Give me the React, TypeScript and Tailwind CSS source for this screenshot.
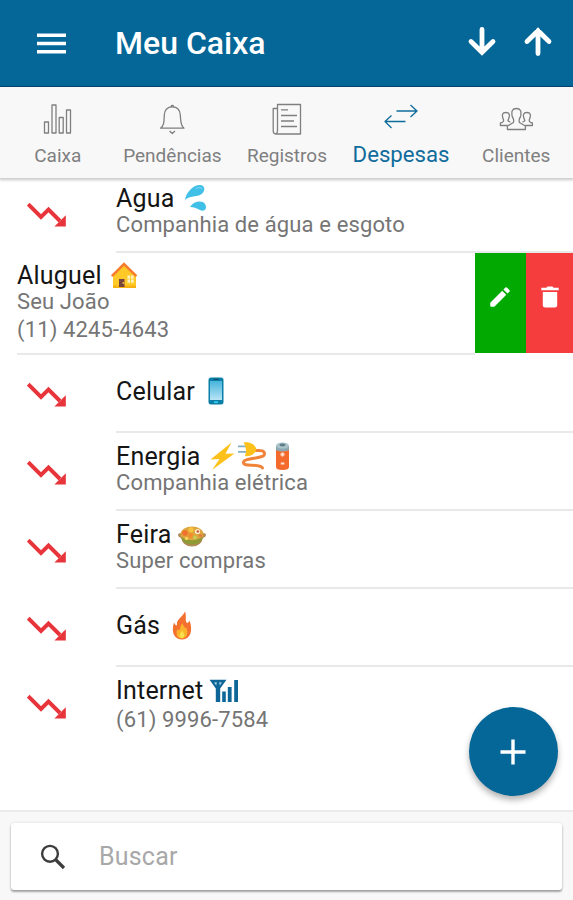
import type { ReactNode } from "react";

const TrendDown = () => (
  <svg width="40" height="26" viewBox="0 0 40 26" fill="none">
    <path d="M1.2 2.2 L14 15 L21.5 7.5 L33 19" stroke="#e8343b" strokeWidth="3.9" />
    <path d="M38.8 13.2 V24.6 H27.4 Z" fill="#e8343b" />
  </svg>
);

const Drops = () => (
  <svg width="24" height="28" viewBox="0 0 24 28" className="ml-[9px] mt-[-1px]">
    <path d="M1 16 C2 8 10 0 17 1 C22 2 21 9 16 11 C10 13 5 12 1 16Z" fill="#40c0e7" />
    <path d="M6 23 C10 17 18 16 21 20 C24 25 20 28 16 26 C12 24 10 23 6 23Z" fill="#40c0e7" />
    <path d="M12 5 C14 3 17 3 18 5" stroke="#81d4fa" strokeWidth="1.2" fill="none" />
  </svg>
);

const House = () => (
  <svg width="26" height="26" viewBox="0 0 26 26" className="ml-[9px]">
    <path d="M2 13 L13 3 L25 13 V26 H2Z" fill="#ffca28" />
    <path d="M2 23.5 H25 V26 H2Z" fill="#f7b312" />
    <path d="M1.6 13.4 L13 2 L24.6 13.4" stroke="#f57c2c" strokeWidth="2.6" fill="none" strokeLinecap="round" />
    <path d="M8 17 H13.5 V25 H8Z" fill="#75443f" />
    <path d="M11.5 20 H13.5 V22 H11.5Z" fill="#e7a83a" />
    <path d="M16.5 13.5 h2.6 v3.2 h-2.6z M20 13.5 h2.6 v3.2 H20z M16.5 17.6 h2.6 v3.2 h-2.6z M20 17.6 h2.6 v3.2 H20z" fill="#fff3c4" />
  </svg>
);

const Phone = () => (
  <svg width="16" height="28" viewBox="0 0 16 28" className="ml-[13px] mt-[-1px]">
    <defs>
      <linearGradient id="screen" x1="0" y1="0" x2="0" y2="1">
        <stop offset="0" stopColor="#45b5dc" />
        <stop offset="1" stopColor="#b9e4f5" />
      </linearGradient>
    </defs>
    <rect x="0.5" y="0.5" width="15" height="27" rx="2.5" fill="#0b7fa8" />
    <rect x="2" y="4" width="12" height="19" fill="url(#screen)" />
    <path d="M5.5 2.3h5" stroke="#0a4860" strokeWidth="1" />
    <path d="M6 25.2h4" stroke="#3ed0ee" strokeWidth="1.6" />
  </svg>
);

const Bolt = () => (
  <svg width="26" height="28" viewBox="0 0 26 28" className="ml-[8px] mt-[-1px]">
    <path d="M22.5 0.5 L1.5 17.5 L10.5 17 L3 28 L25.5 11.5 L16.5 11.8Z" fill="#fcc21b" />
  </svg>
);

const Plug = () => (
  <svg width="30" height="28" viewBox="0 0 30 28" className="ml-[2px] mt-[-1px]" fill="none">
    <path d="M17 8.5 C21 9 27.5 7 27.5 12 C27.5 17 7.5 15.5 6.5 20 C5.5 26 22 20.5 25.5 26" stroke="#f08337" strokeWidth="3" strokeLinecap="round" />
    <path d="M1 4.4 H9 M1 9.8 H9" stroke="#82aebf" strokeWidth="1.8" />
    <path d="M6.5 0.6 C12.5 -0.5 18.5 2.5 19.5 7.5 C18 12.5 13 15 8 14 Q9.5 10 8.8 7 Q8.5 3 6.5 0.6Z" fill="#fcc21b" />
  </svg>
);

const Battery = () => (
  <svg width="15" height="28" viewBox="0 0 15 28" className="ml-[8px] mt-[-1px]">
    <path d="M1 4 H14 V25 Q14 28 7.5 28 Q1 28 1 25Z" fill="#f4692c" />
    <path d="M1 8 V4 H14 V8 Q7.5 11 1 8Z" fill="#8da8b2" />
    <ellipse cx="7.5" cy="3.6" rx="6.5" ry="3" fill="#a9c3c9" />
    <ellipse cx="7.5" cy="3" rx="3" ry="1.4" fill="#607d87" />
    <path d="M5.5 12.5h4M7.5 10.5v4M5.8 21.5h3.6" stroke="#ffe3cf" strokeWidth="2" />
  </svg>
);

const Bowl = () => (
  <svg width="30" height="24" viewBox="0 0 30 24" className="ml-[6px] mt-[4px]">
    <path d="M1 10 Q1 8 4 8 H26 Q29 8 29 10 Q29 12 26 13 Q24 21.5 15 21.5 Q6 21.5 4 13 Q1 12 1 10Z" fill="#b08a55" />
    <ellipse cx="15" cy="9.5" rx="11.5" ry="8" fill="#dda53c" />
    <path d="M4 11.5 Q15 19 26 11.5 Q24 19.5 15 19.5 Q6 19.5 4 11.5Z" fill="#8d9a35" />
    <circle cx="8" cy="8" r="2.8" fill="#f2702e" />
    <circle cx="14" cy="4.8" r="2.6" fill="#f7c33d" />
    <circle cx="20.5" cy="6.5" r="2.6" fill="#fff0cf" />
    <circle cx="20.8" cy="6.5" r="1.3" fill="#c2573e" />
    <circle cx="13.5" cy="10.5" r="2.4" fill="#f58b2d" />
    <circle cx="18" cy="12.5" r="2" fill="#c4cc55" />
    <circle cx="9.5" cy="13.5" r="1.6" fill="#ffd75b" />
    <circle cx="23.5" cy="10.5" r="1.6" fill="#e27a44" />
  </svg>
);

const Flame = () => (
  <svg width="20" height="29" viewBox="0 0 20 29" className="ml-[12px] mt-[-1px]">
    <path d="M13 0.5 C15 6 12.5 9 15 12 Q16.5 12 17.5 9.5 C20.5 17 20 28 10 28.5 C0.5 28.5 -0.5 19 2 11.5 Q3 14.5 5 14.5 C4 8 10 7 13 0.5Z" fill="#f3702f" />
    <path d="M10.5 12 C11.5 16 13 17 14.5 17 C17 23 14 27.5 10 27.5 C5 27.5 3.5 23 5.2 18.5 Q7 19.5 8 18.5 C8 16 9 14 10.5 12Z" fill="#fbb32b" />
    <path d="M10.3 19 C10.5 21.5 12.5 22 12.3 24.5 C11.8 27.8 7.8 27.5 7.6 24.8 C7.5 22.5 9.7 21.5 10.3 19Z" fill="#fde04f" />
  </svg>
);

const Signal = () => (
  <svg width="30" height="24" viewBox="0 0 30 24" className="ml-[6px] mt-[2px]" fill="#0e6698">
    <path d="M0.5 0.8 H17.5 L11.2 9.5 V23 H6.8 V9.5Z" />
    <path d="M13.2 12.5h3.6V23h-3.6z M18.8 8h3.8v15h-3.8z M25.2 1h3.8v22h-3.8z" />
    <path d="M5 3.6 L7.2 6.4 L7.9 3.3Z M10.1 3.3 L10.8 6.4 L13 3.6Z" fill="#a5d2e5" />
  </svg>
);

const tabs: { label: string; icon: ReactNode; active?: boolean }[] = [
  {
    label: "Caixa",
    icon: (
      <path d="M7.5 21h4v11h-4z M15 4h4v28h-4z M22.2 16.5h4V32h-4z M29.5 9h4v23h-4z" />
    ),
  },
  {
    label: "Pendências",
    icon: (
      <path d="M8.5 27.2 C12.3 24.5 12 20 12.3 14 C12.6 9 15.3 5.8 20.3 5.8 C25.3 5.8 28 9 28.3 14 C28.8 20 28.3 24.5 32 27.2Z M18.8 5.5 Q20.3 3.2 21.8 5.5 M17.5 30 L20.3 32.5 L23 30" />
    ),
  },
  {
    label: "Registros",
    icon: (
      <path d="M11.5 3.5 H34.5 V33 H10.5 Q7.2 33 7.2 30 V7.5 H11.5Z M11.5 7.5 V30 Q11.5 32 9.5 33 M15 8.8h7 M15 14.5h16 M15 20h13 M15 25.5h16" />
    ),
  },
  {
    label: "Despesas",
    active: true,
    icon: <path d="M15.5 10H36 M29.5 4 L36 10 L29.5 16 M24.5 20.5H4 M10.5 14.5 L4 20.5 L10.5 27" />,
  },
  {
    label: "Clientes",
    icon: (
      <path d="M17.4 21.5 Q18.4 18.5 16.2 15.5 C15.2 10 16.2 7.5 20.4 7.5 C24.6 7.5 25.6 10 24.6 15.5 Q22.4 18.5 23.4 21.5 L29.4 25 V28.5 H11.4 V25 Z M14.4 21 Q10.9 20 12.4 18.5 C14.4 14 13.4 11.5 9.9 11.5 C6.4 11.5 5.4 14 7.4 18.5 Q8.4 21 4.4 22 V24.5 H11.4 M26.4 21 Q29.9 20 28.4 18.5 C26.4 14 27.4 11.5 30.9 11.5 C34.4 11.5 35.4 14 33.4 18.5 Q32.4 21 36.4 22 V24.5 H29.4" />
    ),
  },
];

const TITLE = "flex h-7 items-start whitespace-nowrap pt-px text-[25px] leading-7 tracking-[0.2px] text-[#151515]";
const SUB = "whitespace-nowrap text-[22px] leading-[26px] tracking-[0.13px] text-[#757575]";

type RowProps = {
  title: string;
  emoji: ReactNode;
  sub?: string;
  height: string;
  pad: string;
  iconPad: string;
  subGap?: string;
  last?: boolean;
};

const Row = ({ title, emoji, sub, height, pad, iconPad, subGap = "", last }: RowProps) => (
  <div className={`flex shrink-0 ${height}`}>
    <div className={`w-[116px] shrink-0 pl-[26.5px] ${iconPad}`}>
      <TrendDown />
    </div>
    <div className={`flex-1 ${pad} ${last ? "" : "border-b-2 border-[#e9e9e9]"}`}>
      <div className={TITLE}>
        <span>{title}</span>
        {emoji}
      </div>
      {sub && <div className={`${SUB} ${subGap}`}>{sub}</div>}
    </div>
  </div>
);

export default function App() {
  return (
    <div className="relative flex h-[900px] w-[573px] flex-col overflow-hidden bg-white font-['Roboto',sans-serif]">
      <header className="flex h-[87px] shrink-0 items-center border-b border-[#064a7c] bg-[#046798] pl-[37px] pr-[20px] text-white">
        <svg width="29" height="21" viewBox="0 0 29 21" className="shrink-0" stroke="#fff" strokeWidth="3.6">
          <path d="M0 2.3h29M0 10.5h29M0 18.7h29" />
        </svg>
        <h1 className="ml-[49px] flex-1 whitespace-nowrap text-[32px] font-medium leading-10">Meu Caixa</h1>
        <svg width="30" height="30" viewBox="0 0 30 30" fill="none" stroke="#fff" strokeWidth="4.8" strokeLinecap="round" className="mr-[26px] mt-[-4px]">
          <path d="M15 3.5V25 M4 15.5 L15 26.3 L26 15.5" />
        </svg>
        <svg width="30" height="30" viewBox="0 0 30 30" fill="none" stroke="#fff" strokeWidth="4.8" strokeLinecap="round" className="mt-[-4px]">
          <path d="M15 27.5V5 M4 15.5 L15 4.7 L26 15.5" />
        </svg>
      </header>

      <nav className="z-10 grid h-[91px] shrink-0 grid-cols-5 bg-[#f8f8f8] shadow-[0_1px_3px_1px_rgba(0,0,0,0.22)]">
        {tabs.map((t) => (
          <div key={t.label} className={`flex flex-col items-center pt-[14px] ${t.active ? "text-[#0f6c9c]" : "text-[#7f7f7f]"}`}>
            <svg width="40" height="36" viewBox="0 0 40 36" fill="none" stroke="currentColor" strokeWidth="1.3" strokeLinejoin="round">
              {t.icon}
            </svg>
            <span className={`whitespace-nowrap leading-6 ${t.active ? "mt-[5px] text-[22.2px]" : "mt-[7px] pl-px text-[19px]"}`}>
              {t.label}
            </span>
          </div>
        ))}
      </nav>

      <main className="flex flex-1 flex-col">
        <Row title="Agua" emoji={<Drops />} sub="Companhia de água e esgoto" height="h-[75px]" pad="pt-[6px]" iconPad="pt-[24px]" />
        <div className="flex h-[102px] shrink-0">
          <div className="ml-[17px] flex-1 border-b-2 border-[#e9e9e9] pt-[8px]">
            <div className={TITLE}>
              <span>Aluguel</span>
              <House />
            </div>
            <div className={SUB}>Seu João</div>
            <div className={`${SUB} mt-[2px]`}>(11) 4245-4643</div>
          </div>
          <div className="flex h-[100px]">
            <button className="flex w-[51px] justify-center bg-[#02a901] pr-[2px] pt-[31px]">
              <svg width="26" height="26" viewBox="0 0 24 24" fill="#fff">
                <path d="M3 17.25V20q0 1 1 1h2.75L17.81 9.94l-3.75-3.75L3 17.25zM20.71 7.04a1 1 0 0 0 0-1.41l-2.34-2.34a1 1 0 0 0-1.41 0l-1.83 1.83 3.75 3.75 1.83-1.83z" />
              </svg>
            </button>
            <button className="flex w-[47px] justify-center bg-[#f53d3d] pt-[33px]">
              <svg width="18" height="22" viewBox="0 0 18 22" fill="#fff">
                <path d="M1.8 6h14.4v13q0 2.5-2.5 2.5H4.3q-2.5 0-2.5-2.5z M0.3 1.7h5L6.6.5h4.8l1.3 1.2h5v2.6H.3z" />
              </svg>
            </button>
          </div>
        </div>
        <Row title="Celular" emoji={<Phone />} height="h-[78px]" pad="pt-[22px]" iconPad="pt-[27px]" />
        <Row title="Energia" emoji={<><Bolt /><Plug /><Battery /></>} sub="Companhia elétrica" height="h-[78px]" pad="pt-[9px]" iconPad="pt-[27px]" />
        <Row title="Feira" emoji={<Bowl />} sub="Super compras" height="h-[78px]" pad="pt-[9px]" iconPad="pt-[27px]" />
        <Row title="Gás" emoji={<Flame />} height="h-[78px]" pad="pt-[22px]" iconPad="pt-[27px]" />
        <Row title="Internet" emoji={<Signal />} sub="(61) 9996-7584" height="h-[78px]" pad="pt-[9px]" iconPad="pt-[27px]" subGap="mt-[3px]" last />
      </main>

      <footer className="h-[90px] shrink-0 border-t-2 border-[#ebebeb] bg-[#f8f8f8] px-[11px] pt-[11px]">
        <div className="flex h-[67px] items-center rounded-[3px] bg-white pl-[29px] shadow-[0_2px_2px_rgba(0,0,0,0.32),0_0_3px_rgba(0,0,0,0.12)]">
          <svg width="26" height="26" viewBox="0 0 26 26" fill="none" stroke="#3d3d3d">
            <circle cx="10" cy="9.8" r="7.9" strokeWidth="2.4" />
            <path d="M15.5 15.5 L24 24" strokeWidth="3.2" />
          </svg>
          <span className="ml-[33px] text-[25px] leading-8 tracking-[0.2px] text-[#a8a8a8]">Buscar</span>
        </div>
      </footer>

      <button className="absolute left-[468.5px] top-[707px] flex h-[89px] w-[89px] items-center justify-center rounded-full bg-[#046798] shadow-[0_4px_6px_rgba(0,0,0,0.3)]">
        <svg width="26" height="26" viewBox="0 0 26 26" stroke="#fff" strokeWidth="3.4">
          <path d="M13 0.5v25M0.5 13h25" />
        </svg>
      </button>
    </div>
  );
}
